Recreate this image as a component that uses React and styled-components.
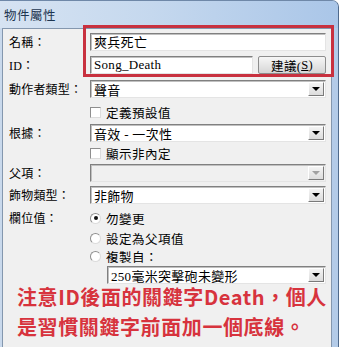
import styled, { createGlobalStyle } from "styled-components";

const Global = createGlobalStyle`
    html, body {
        margin: 0;
        padding: 0;
        background: #ffffff;
    }
    body {
        width: 339px;
        height: 347px;
        overflow: hidden;
        font-family: "Liberation Serif", "Noto Sans CJK TC", serif;
    }
`;

const Window = styled.div`
    position: relative;
    width: 339px;
    height: 347px;
    display: flex;
    flex-direction: column;
    background: #b9cfea;
    border-top-right-radius: 7px;
    box-sizing: border-box;
    border-right: 1px solid #4f6a8c;
    border-top: 1px solid #6f88a8;
    overflow: hidden;
`;

const TitleBar = styled.div`
    height: 27px;
    flex: none;
    display: flex;
    align-items: center;
    padding-left: 4px;
    background: linear-gradient(to right, #d6e3f2 0%, #c5d8ee 45%, #aac6e8 100%);
    color: #1d3550;
    font-family: "Noto Sans CJK TC", sans-serif;
    font-size: 12.5px;
    letter-spacing: 0.5px;
`;

const Body = styled.div`
    flex: 1;
    display: flex;
    padding: 0 6px 0 2px;
    background: linear-gradient(to right, #c9d9ec, #b3cbe8);
`;

const Panel = styled.div`
    flex: 1;
    min-width: 0;
    background: #f0f0f0;
    border-top: 1px solid #8497ae;
    border-left: 1px solid #8497ae;
    border-right: 1px solid #8497ae;
    padding: 1px 5px 0 6px;
    font-size: 12px;
    color: #000;
`;

const Row = styled.div`
    display: grid;
    grid-template-columns: 81px minmax(0, 1fr);
    align-items: center;
    height: ${(p) => p.$h}px;
`;

const Label = styled.span`
    letter-spacing: 0.2px;
    white-space: nowrap;
`;

const FieldGroup = styled.div`
    display: flex;
    gap: 5px;
    grid-column: 2;
    min-width: 0;
    margin-left: ${(p) => p.$indent || 0}px;
`;

const Input = styled.div`
    flex: 1;
    min-width: 0;
    height: 18px;
    box-sizing: border-box;
    background: #fff;
    border: 1px solid;
    border-color: #808080 #e4e4e4 #e4e4e4 #808080;
    box-shadow: inset 1px 1px 0 #c0c0c0;
    display: flex;
    align-items: center;
    padding-left: 3px;
    font-size: 13px;
    letter-spacing: 0.3px;
    white-space: nowrap;
    overflow: hidden;
`;

const SelectBox = styled(Input)`
    background: ${(p) => (p.$disabled ? "#f0f0f0" : "#fff")};
    padding-right: 1px;
    justify-content: space-between;
`;

const Arrow = styled.div`
    flex: none;
    width: 16px;
    height: 14px;
    box-sizing: border-box;
    background: linear-gradient(#f4f4f4, #dcdcdc);
    border: 1px solid;
    border-color: #fff #7a7a7a #7a7a7a #fff;
    display: flex;
    align-items: center;
    justify-content: center;
    &::after {
        content: "";
        border-left: 4px solid transparent;
        border-right: 4px solid transparent;
        border-top: 4px solid ${(p) => (p.$disabled ? "#a0a0a0" : "#000")};
    }
`;

const Button = styled.div`
    flex: none;
    width: 68px;
    height: 18px;
    box-sizing: border-box;
    border: 1px solid #8d8d8d;
    border-radius: 2px;
    background: linear-gradient(#f6f6f6 0%, #e6e6e6 50%, #d6d6d6 100%);
    display: flex;
    align-items: center;
    justify-content: center;
    font-size: 12.5px;
    letter-spacing: 0.3px;
    u {
        text-decoration: underline;
    }
`;

const Check = styled.label`
    grid-column: 2;
    display: flex;
    align-items: center;
    gap: 5px;
    letter-spacing: 0.5px;
    font-size: 12.5px;
    white-space: nowrap;
`;

const Box = styled.span`
    width: 11px;
    height: 11px;
    box-sizing: border-box;
    background: #fff;
    border: 1px solid;
    border-color: #8e8e8e #dcdcdc #dcdcdc #8e8e8e;
    border-radius: ${(p) => (p.$round ? "50%" : "0")};
    display: flex;
    align-items: center;
    justify-content: center;
    &::after {
        content: "";
        display: ${(p) => (p.$on ? "block" : "none")};
        width: 4px;
        height: 4px;
        border-radius: 50%;
        background: #111;
    }
`;

const Highlight = styled.div`
    position: absolute;
    left: 83px;
    top: 24px;
    width: 251px;
    height: 52px;
    box-sizing: border-box;
    border: 3px solid #c8313f;
    pointer-events: none;
`;

const Note = styled.p`
    margin: -3px 0 0 8px;
    color: #d7333d;
    font-family: "Noto Sans CJK TC", sans-serif;
    font-weight: bold;
    font-size: 20px;
    line-height: 30px;
    letter-spacing: 0.6px;
    white-space: nowrap;
`;

const Select = ({ value, disabled }) => (
    <SelectBox $disabled={disabled}>
        <span>{value}</span>
        <Arrow $disabled={disabled} />
    </SelectBox>
);

const App = () => {
    return (
        <Window>
            <Global />
            <TitleBar>物件屬性</TitleBar>
            <Body>
                <Panel>
                    <Row $h={23}>
                        <Label>名稱：</Label>
                        <FieldGroup>
                            <Input>爽兵死亡</Input>
                        </FieldGroup>
                    </Row>
                    <Row $h={24}>
                        <Label>ID：</Label>
                        <FieldGroup>
                            <Input>Song_Death</Input>
                            <Button>
                                建議(<u>S</u>)
                            </Button>
                        </FieldGroup>
                    </Row>
                    <Row $h={24}>
                        <Label>動作者類型：</Label>
                        <FieldGroup>
                            <Select value="聲音" />
                        </FieldGroup>
                    </Row>
                    <Row $h={22}>
                        <Check>
                            <Box />
                            定義預設值
                        </Check>
                    </Row>
                    <Row $h={20}>
                        <Label>根據：</Label>
                        <FieldGroup>
                            <Select value="音效 - 一次性" />
                        </FieldGroup>
                    </Row>
                    <Row $h={20}>
                        <Check>
                            <Box />
                            顯示非內定
                        </Check>
                    </Row>
                    <Row $h={20}>
                        <Label>父項：</Label>
                        <FieldGroup>
                            <Select value="" disabled />
                        </FieldGroup>
                    </Row>
                    <Row $h={24}>
                        <Label>飾物類型：</Label>
                        <FieldGroup>
                            <Select value="非飾物" />
                        </FieldGroup>
                    </Row>
                    <Row $h={22}>
                        <Label>欄位值：</Label>
                        <Check>
                            <Box $round $on />
                            勿變更
                        </Check>
                    </Row>
                    <Row $h={18}>
                        <Check>
                            <Box $round />
                            設定為父項值
                        </Check>
                    </Row>
                    <Row $h={18}>
                        <Check>
                            <Box $round />
                            複製自：
                        </Check>
                    </Row>
                    <Row $h={20}>
                        <FieldGroup $indent={17}>
                            <Select value="250毫米突擊砲未變形" />
                        </FieldGroup>
                    </Row>
                    <Note>
                        注意ID後面的關鍵字Death，個人
                        <br />
                        是習慣關鍵字前面加一個底線。
                    </Note>
                </Panel>
            </Body>
            <Highlight />
        </Window>
    );
};

export default App;
